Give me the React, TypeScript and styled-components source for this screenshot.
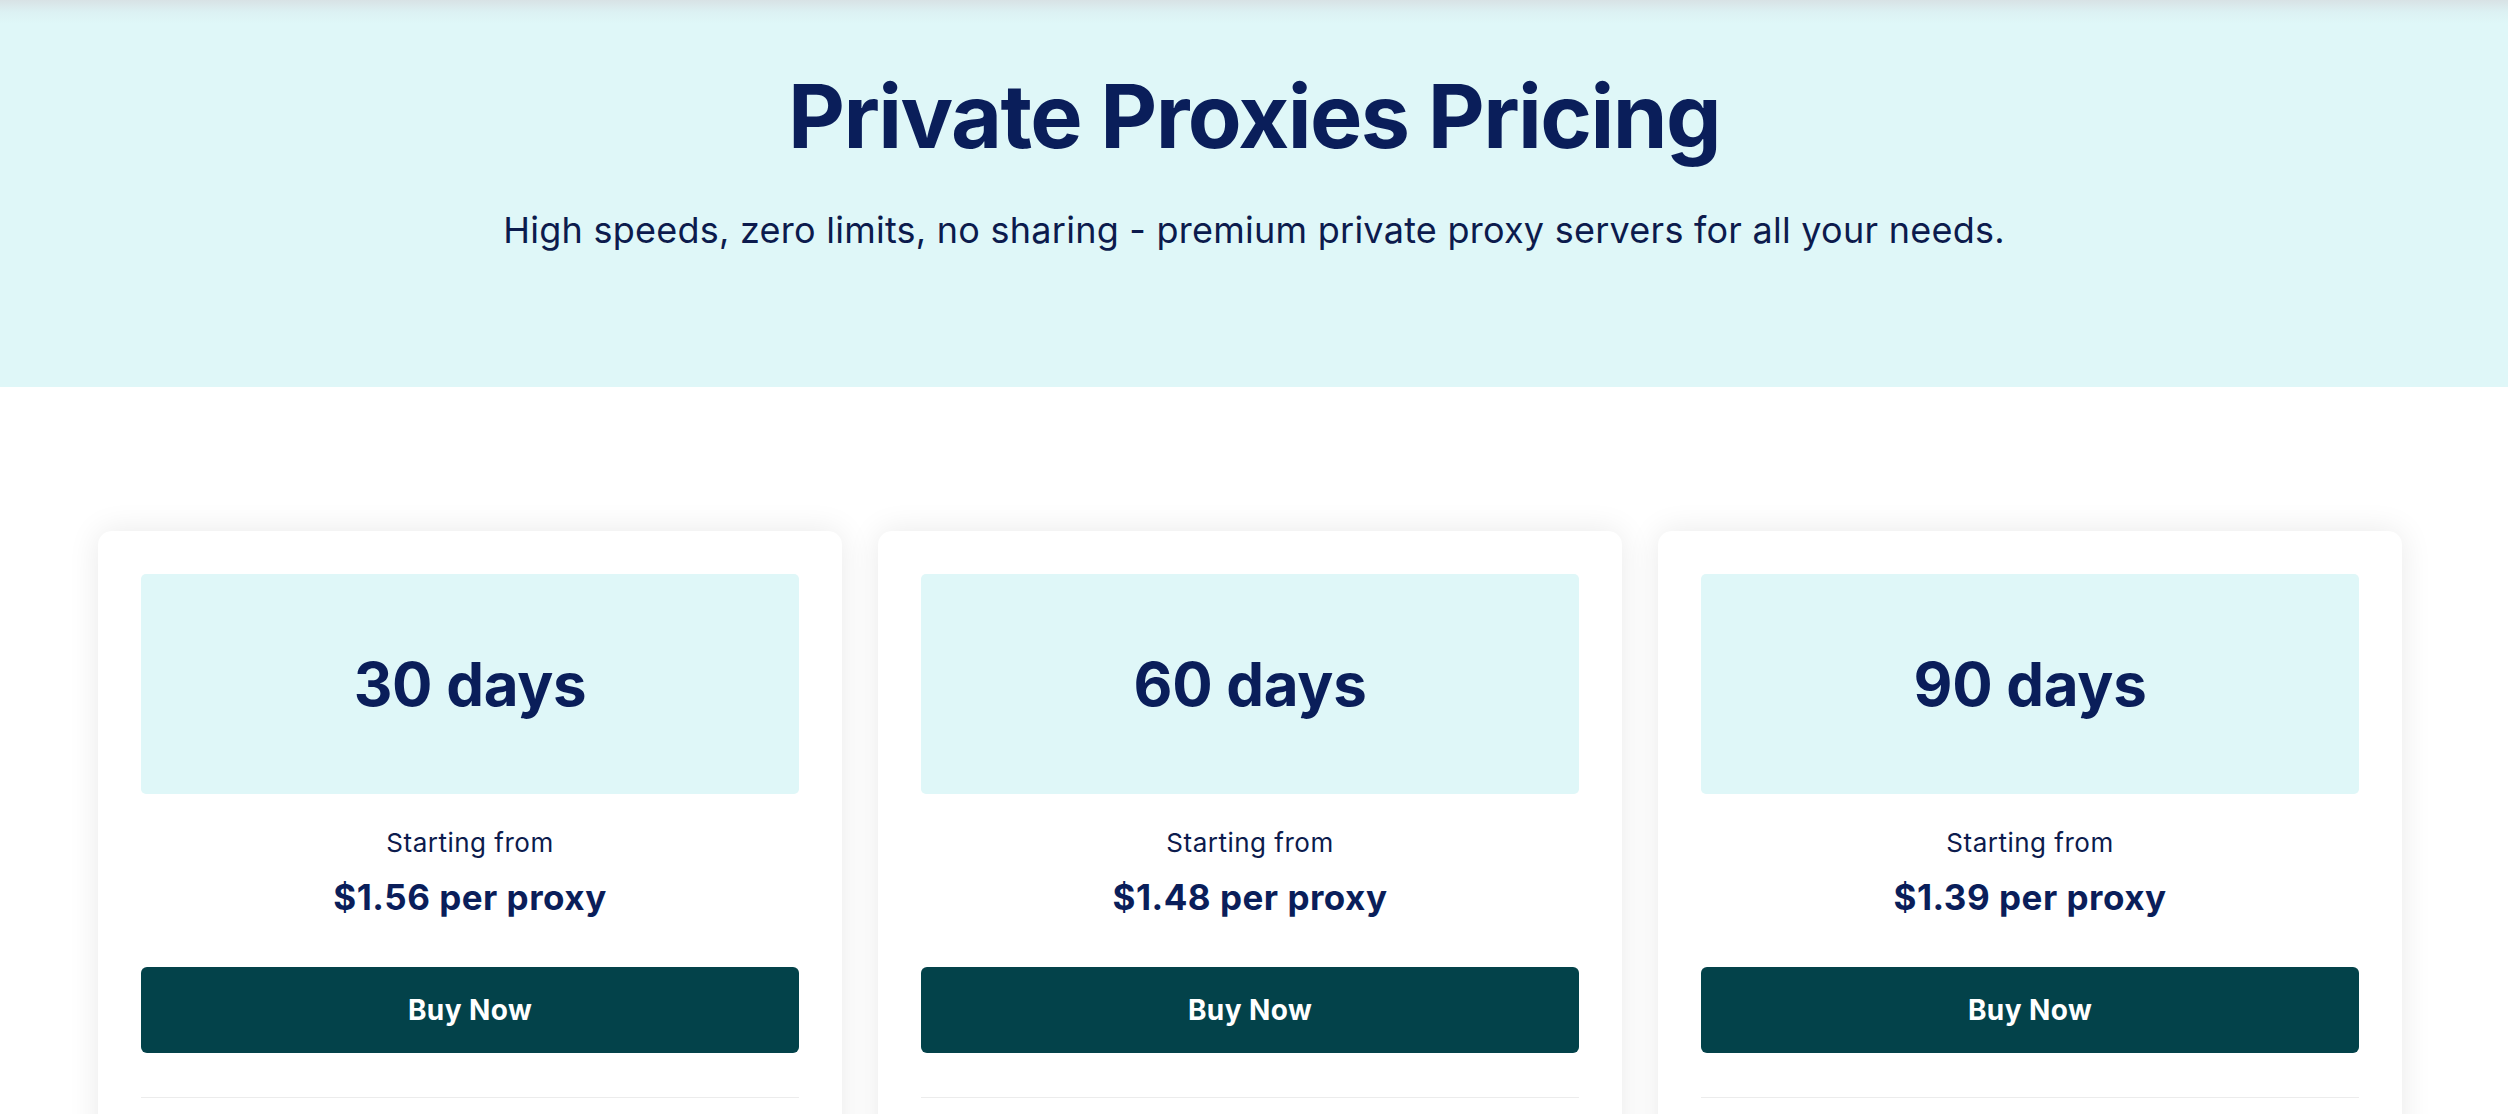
import React from "react";
import styled, { createGlobalStyle } from "styled-components";

const GlobalStyle = createGlobalStyle`
  * {
    box-sizing: border-box;
  }
  body {
    margin: 0;
    background: #ffffff;
    font-family: Inter, "Noto Sans", sans-serif;
    color: #0b1d55;
    overflow: hidden;
  }
`;

const Hero = styled.section`
  background: linear-gradient(to bottom, #d8e2e5 0px, #dcf1f3 12px, #dff7f8 24px, #dff7f8 100%);
  padding: 72px 0 139px;
  text-align: center;
`;

const Title = styled.h1`
  margin: 0;
  font-family: Inter, sans-serif;
  font-weight: 700;
  font-size: 88px;
  line-height: 1;
  letter-spacing: -1.6px;
  color: #0a1e5a;
`;

const Subtitle = styled.p`
  margin: 52px 0 0;
  font-size: 36px;
  line-height: 1;
  font-weight: 400;
  letter-spacing: 0.25px;
  color: #0c1b4d;
`;

const Plans = styled.section`
  display: grid;
  grid-template-columns: repeat(3, 744px);
  gap: 36px;
  padding: 144px 106px 0 98px;
`;

const Card = styled.div`
  background: #ffffff;
  border-radius: 14px;
  box-shadow: 0 0 32px rgba(0, 0, 0, 0.09);
  padding: 43px 43px 80px;
  display: flex;
  flex-direction: column;
  align-items: stretch;
  text-align: center;
`;

const Period = styled.div`
  height: 220px;
  border-radius: 5px;
  background: #dff7f8;
  display: flex;
  align-items: center;
  justify-content: center;
  font-size: 60px;
  font-weight: 700;
  letter-spacing: -0.3px;
  color: #0a1e5a;
`;

const From = styled.div`
  margin-top: 36px;
  font-size: 26px;
  line-height: 1;
  letter-spacing: 0.5px;
  color: #0c1b4d;
`;

const Price = styled.div`
  margin-top: 24px;
  font-size: 35px;
  line-height: 1;
  font-weight: 700;
  letter-spacing: 0.5px;
  color: #0a1e5a;
`;

const BuyButton = styled.button`
  margin-top: 52px;
  height: 86px;
  border: none;
  border-radius: 6px;
  background: #03424a;
  color: #ffffff;
  font-family: Inter, sans-serif;
  font-size: 28px;
  font-weight: 700;
  letter-spacing: 0.4px;
  cursor: pointer;
`;

const Divider = styled.hr`
  margin: 44px 0 0;
  border: none;
  border-top: 1.5px solid #ececec;
`;

const plans = [
  { days: 30, price: "1.56" },
  { days: 60, price: "1.48" },
  { days: 90, price: "1.39" },
];

const App = (): JSX.Element => {
  return (
    <>
      <GlobalStyle />
      <Hero>
        <Title>Private Proxies Pricing</Title>
        <Subtitle>
          High speeds, zero limits, no sharing - premium private proxy servers for all your needs.
        </Subtitle>
      </Hero>
      <Plans>
        {plans.map((p) => (
          <Card key={p.days}>
            <Period>{p.days} days</Period>
            <From>Starting from</From>
            <Price>${p.price} per proxy</Price>
            <BuyButton>Buy Now</BuyButton>
            <Divider />
          </Card>
        ))}
      </Plans>
    </>
  );
};

export default App;
